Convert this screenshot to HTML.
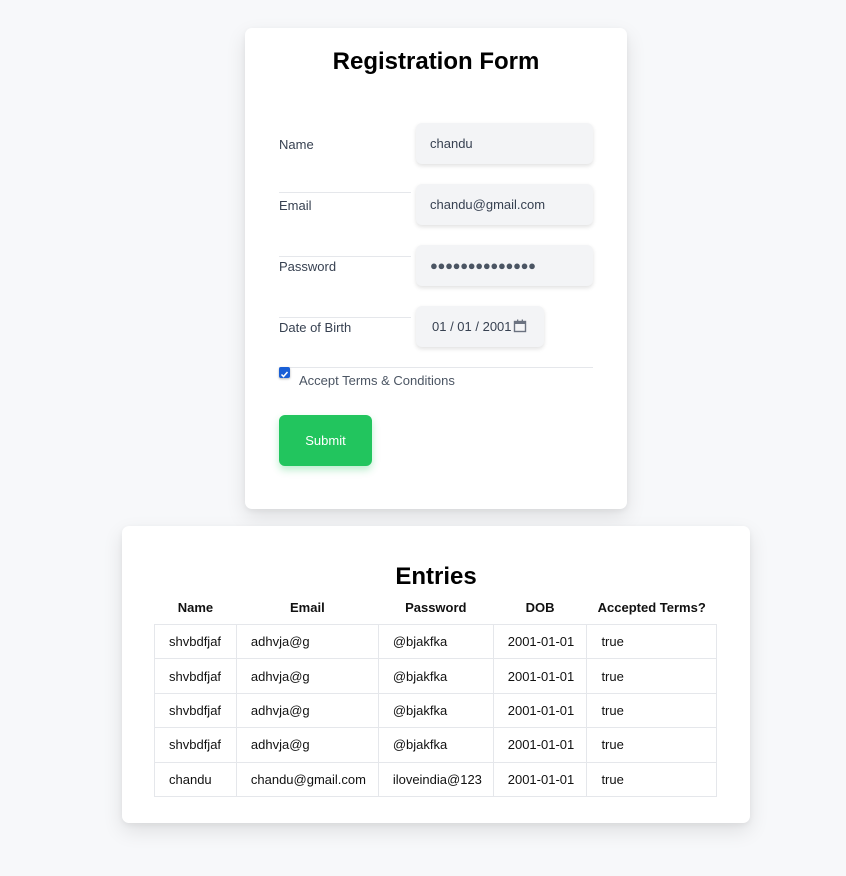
<!DOCTYPE html><html><head><style>
body{margin:0;width:846px;height:876px;background:#f7f8fa;font-family:"Liberation Sans",sans-serif;position:relative;overflow:hidden}
.a{position:absolute}
.card{background:#fff;border-radius:7px;box-shadow:0 8px 20px rgba(0,0,0,.1),0 2px 6px rgba(0,0,0,.05)}
.lbl{font-size:13px;color:#374151;left:279px}
.inp{background:#f3f4f6;border-radius:6px;box-shadow:0 2px 4px rgba(0,0,0,.12);font-size:13px;color:#374151;box-sizing:border-box;padding-left:14px;line-height:41px;height:41px}
.line{height:1px;background:#e5e7eb}
table{border-collapse:collapse;font-size:13px;color:#111}
th{font-weight:bold;height:34px;padding:0}
td{border:1px solid #e5e7eb;height:34.4px;padding:0 0 0 14px;box-sizing:border-box}
</style></head><body>
<div class="a card" style="left:245px;top:28px;width:382px;height:481px"></div>
<div class="a" style="left:245px;width:382px;top:48px;text-align:center;font-size:24px;font-weight:bold">Registration Form</div>
<div class="a lbl" style="top:137px">Name</div>
<div class="a inp" style="left:416px;top:123px;width:177px">chandu</div>
<div class="a line" style="left:279px;top:192px;width:132px"></div>
<div class="a lbl" style="top:198px">Email</div>
<div class="a inp" style="left:416px;top:184px;width:177px">chandu@gmail.com</div>
<div class="a line" style="left:279px;top:256px;width:132px"></div>
<div class="a lbl" style="top:259px">Password</div>
<div class="a inp" style="left:416px;top:245px;width:177px;font-size:13px;letter-spacing:-.3px;color:#4b5563">●●●●●●●●●●●●●●</div>
<div class="a line" style="left:279px;top:317px;width:132px"></div>
<div class="a lbl" style="top:320px">Date of Birth</div>
<div class="a inp" style="left:416px;top:306px;width:128px;padding-left:16px">01 / 01 / 2001
<svg class="a" style="left:97px;top:13px" width="14" height="14" viewBox="0 0 14 14"><rect x="1.5" y="2.5" width="11" height="10" fill="none" stroke="#6b7280" stroke-width="1.4"/><rect x="1.5" y="2.5" width="11" height="2.5" fill="#6b7280"/><rect x="4" y="0.5" width="1.3" height="3" fill="#6b7280"/><rect x="8.7" y="0.5" width="1.3" height="3" fill="#6b7280"/></svg></div>
<div class="a line" style="left:279px;top:367px;width:314px"></div>
<div class="a" style="left:279px;top:367px;width:11px;height:11px;background:#1a5fd6;border-radius:2px;box-shadow:0 1px 2px rgba(0,0,0,.3)"><svg width="11" height="11"><path d="M2.5 5.5l2 2 4-4.5" stroke="#fff" stroke-width="1.5" fill="none"/></svg></div>
<div class="a" style="left:299px;top:373px;font-size:13px;color:#4b5563">Accept Terms &amp; Conditions</div>
<div class="a" style="left:279px;top:415px;width:93px;height:51px;background:#22c55e;border-radius:6px;color:#fff;font-size:13px;text-align:center;line-height:51px;box-shadow:0 4px 8px rgba(34,197,94,.3)">Submit</div>

<div class="a card" style="left:122px;top:526px;width:628px;height:297px"></div>
<div class="a" style="left:122px;width:628px;top:563px;text-align:center;font-size:24px;font-weight:bold">Entries</div>
<table class="a" style="left:154px;top:590px;width:563px">
<colgroup><col style="width:82px"><col style="width:142px"><col style="width:115px"><col style="width:94px"><col style="width:130px"></colgroup>
<tr><th>Name</th><th>Email</th><th>Password</th><th>DOB</th><th>Accepted Terms?</th></tr>
<tr><td>shvbdfjaf</td><td>adhvja@g</td><td>@bjakfka</td><td>2001-01-01</td><td>true</td></tr>
<tr><td>shvbdfjaf</td><td>adhvja@g</td><td>@bjakfka</td><td>2001-01-01</td><td>true</td></tr>
<tr><td>shvbdfjaf</td><td>adhvja@g</td><td>@bjakfka</td><td>2001-01-01</td><td>true</td></tr>
<tr><td>shvbdfjaf</td><td>adhvja@g</td><td>@bjakfka</td><td>2001-01-01</td><td>true</td></tr>
<tr><td>chandu</td><td>chandu@gmail.com</td><td>iloveindia@123</td><td>2001-01-01</td><td>true</td></tr>
</table>
</body></html>
